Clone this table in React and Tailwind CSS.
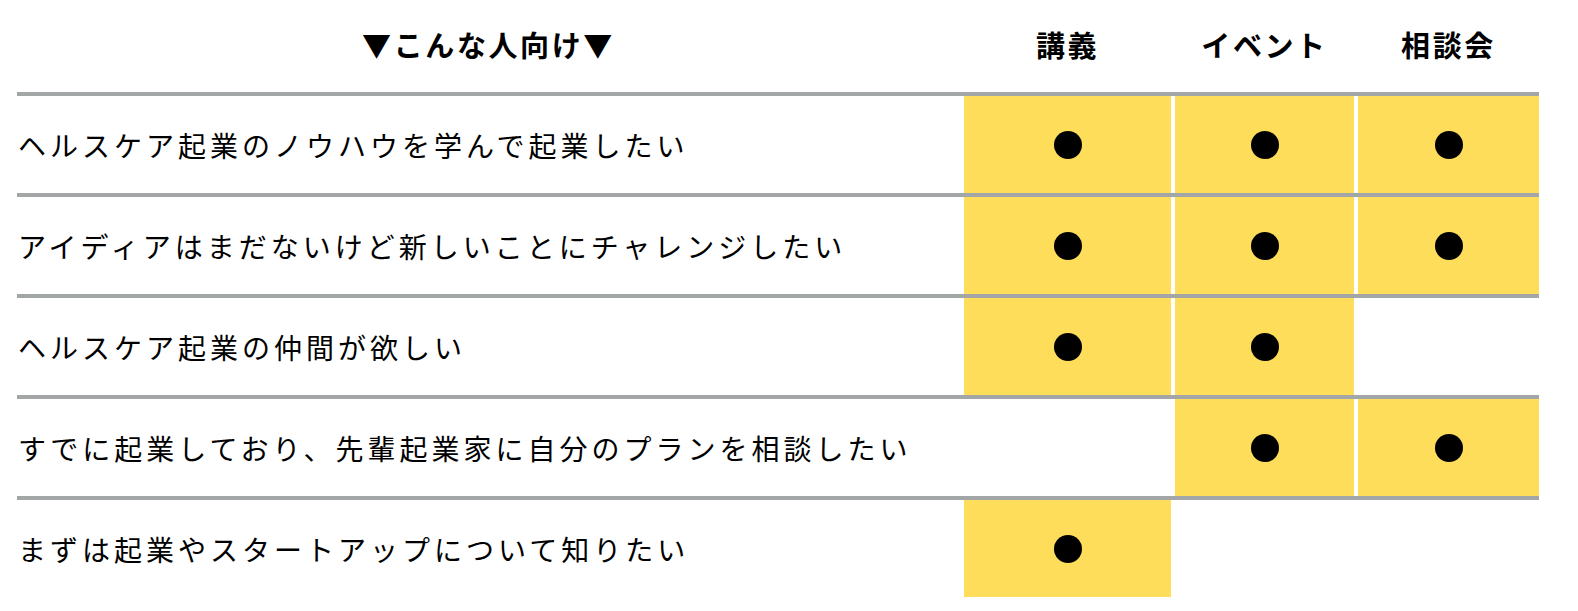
import React from "react";

const rows = [
  { label: "ヘルスケア起業のノウハウを学んで起業したい", marks: [true, true, true] },
  { label: "アイディアはまだないけど新しいことにチャレンジしたい", marks: [true, true, true] },
  { label: "ヘルスケア起業の仲間が欲しい", marks: [true, true, false] },
  { label: "すでに起業しており、先輩起業家に自分のプランを相談したい", marks: [false, true, true] },
  { label: "まずは起業やスタートアップについて知りたい", marks: [true, false, false] },
];

const columns = ["講義", "イベント", "相談会"];

const grid = "grid grid-cols-[943px_207px_179px_181px] gap-x-1";

export default function App() {
  return (
    <div className="min-h-[611px] bg-white pl-[17px] text-black font-['Noto_Sans_CJK_JP',sans-serif]">
      <div className="w-[1522px]">
        {/* header */}
        <div className={`${grid} h-[92px] items-center pb-[2px] text-[29px] font-bold tracking-[0.09em]`}>
          <div className="text-center">▼こんな人向け▼</div>
          {columns.map((c) => (
            <div key={c} className="text-center">{c}</div>
          ))}
        </div>

        {rows.map((row, i) => (
          <div
            key={i}
            className={`${grid} h-[101px] border-t-4 border-[#a2a6a6]`}
          >
            <div className="flex items-center pl-[1px] text-[28px] tracking-[4px]">
              {row.label}
            </div>
            {row.marks.map((on, j) => (
              <div
                key={j}
                className={`flex items-center justify-center ${on ? "bg-[#fedd5a]" : "bg-white"}`}
              >
                {on && <div className="h-7 w-7 rounded-full bg-black" />}
              </div>
            ))}
          </div>
        ))}
      </div>
    </div>
  );
}
